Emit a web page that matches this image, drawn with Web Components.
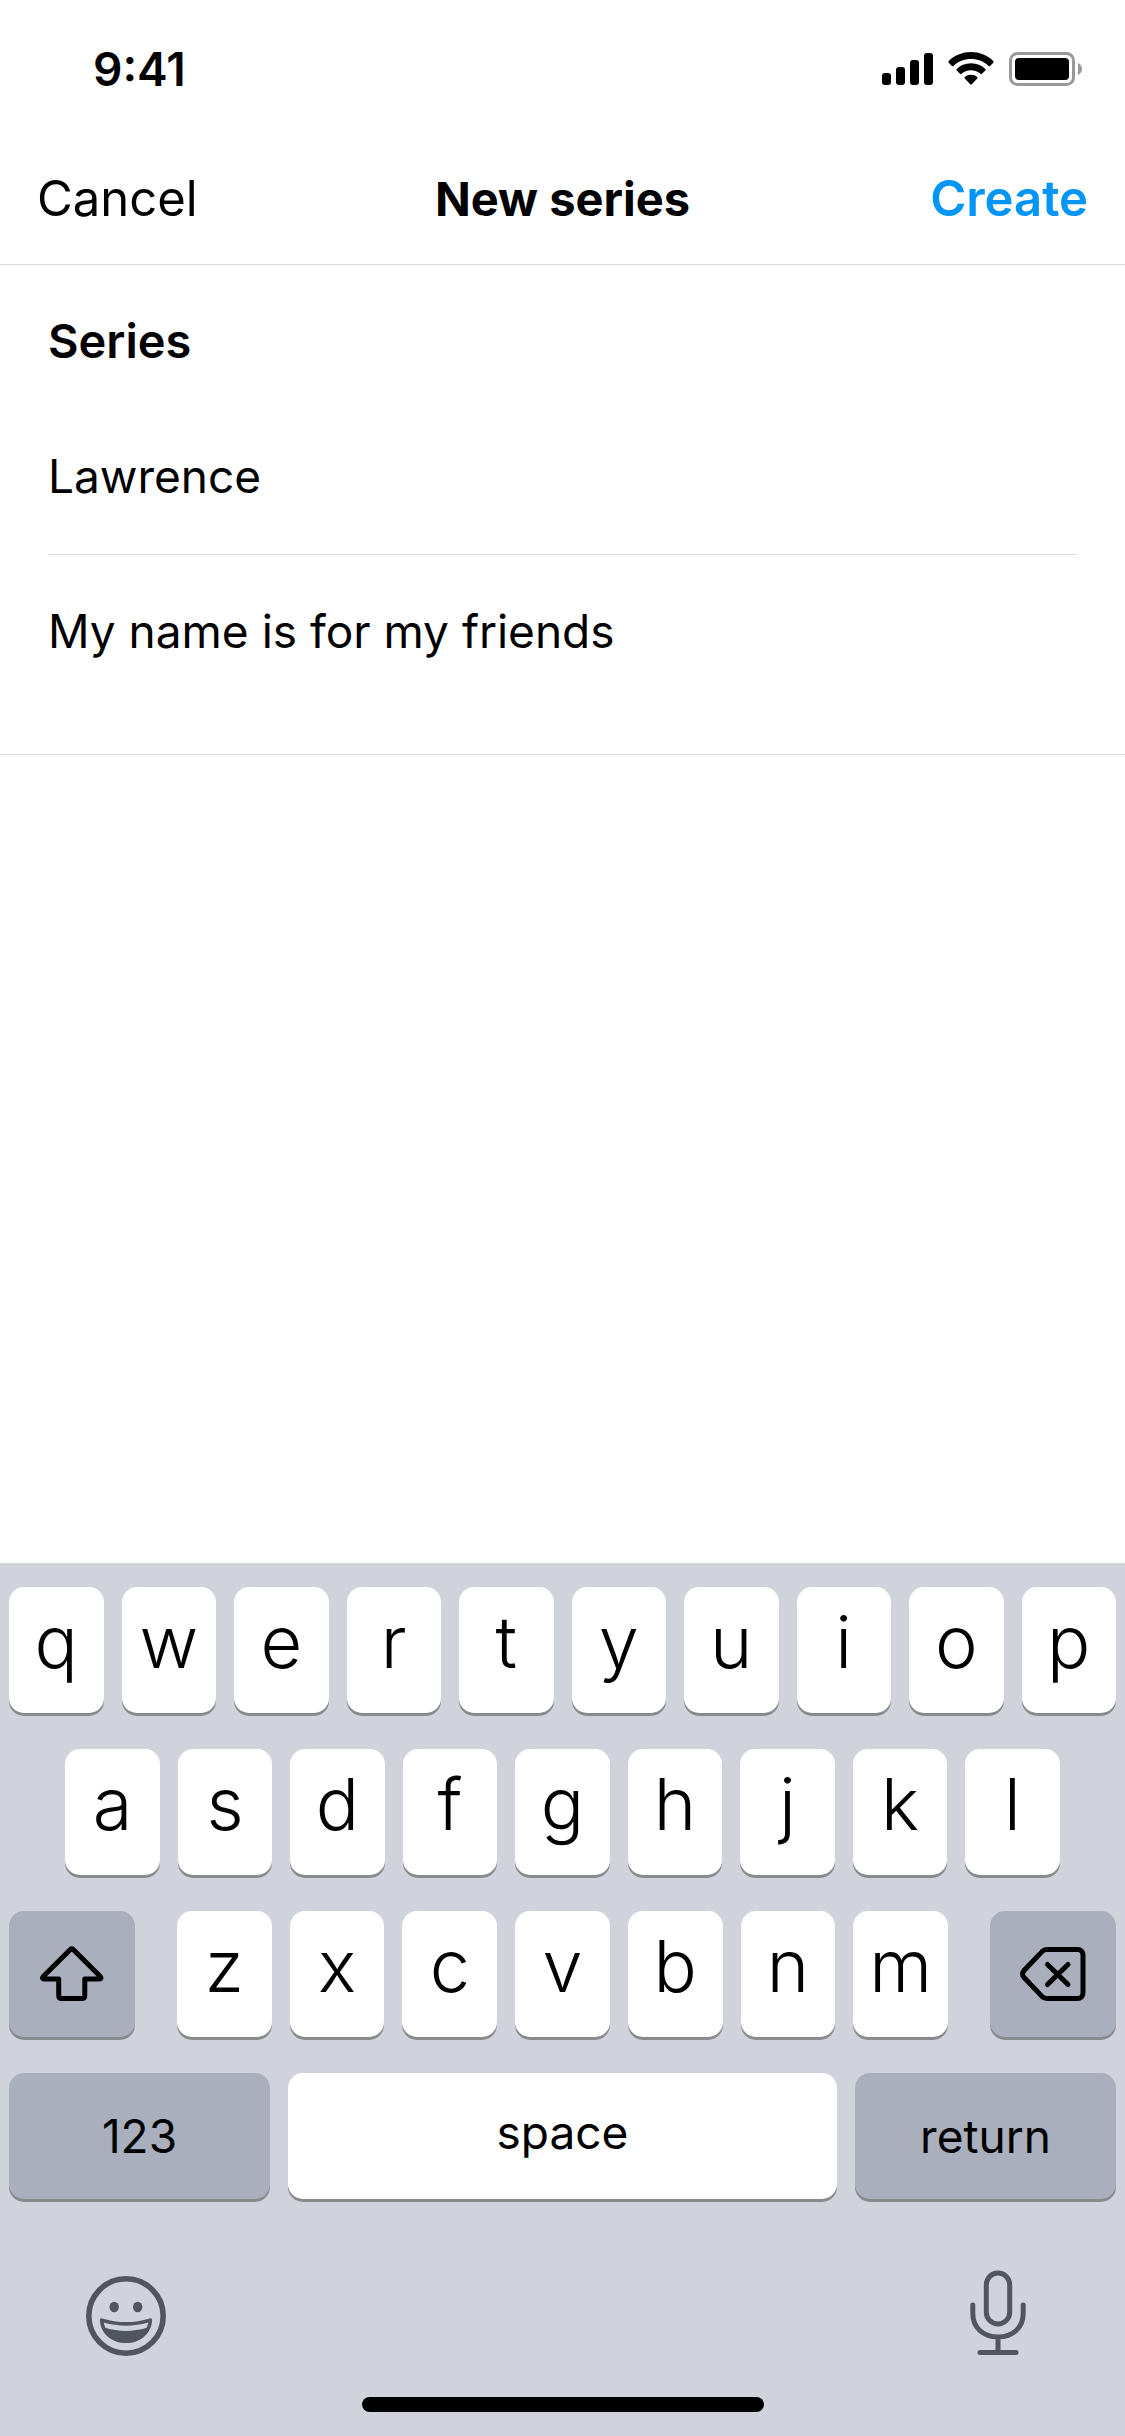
<!DOCTYPE html>
<html lang="en">
<head>
  <meta charset="UTF-8">
  <meta name="viewport" content="width=device-width, initial-scale=1">
  <title>New series</title>
  <style>
    body {
      margin: 0;
      background: #fff;
      color: #000;
      font-family: 'Inter', 'Liberation Sans', sans-serif;
    }
  </style>
</head>
<body>
  <series-screen></series-screen>

  <script>
    /* ── STATUS BAR ── */
    class StatusBar extends HTMLElement {
      constructor() {
        super();
        this.attachShadow({ mode: 'open' });
      }

      connectedCallback() {
        this.shadowRoot.innerHTML = /* html */`
          <style>
            :host {
              display: flex;
              justify-content: space-between;
              align-items: center;
              box-sizing: border-box;
              height: 132px;
              padding: 6px 43px 0 93px;
            }

            .time {
              font-size: 46px;
              font-weight: 600;
            }

            .icons {
              display: flex;
              align-items: center;
              gap: 15px;
            }

            svg { display: block; }
          </style>

          <span class="time"><slot></slot></span>
          <div class="icons">
            <svg width="51" height="34" viewBox="0 0 51 34" aria-hidden="true">
              <rect x="0" y="21" width="9" height="12" rx="3"/>
              <rect x="14" y="15" width="9" height="18" rx="3"/>
              <rect x="28" y="8" width="9" height="25" rx="3"/>
              <rect x="42" y="1" width="9" height="32" rx="3"/>
            </svg>
            <svg width="46" height="34" viewBox="0 0 46 34" aria-hidden="true">
              <path d="M23 0C31.800 0 39.800 3.400 45.300 9.100c.5.5.5 1.100 0 1.600l-3.300 3.200c-.5.5-1 .5-1.500 0C36 9.500 29.900 7 23 7S10 9.500 5.500 13.900c-.5.5-1 .5-1.500 0L.7 10.700c-.5-.5-.5-1.100 0-1.600C6.200 3.400 14.200 0 23 0z"/>
              <path d="M23 11.300c5.700 0 10.700 2.200 14.300 5.700.5.500.5 1.100 0 1.600l-3.300 3.200c-.5.500-1 .5-1.500 0-2.500-2.300-5.800-3.600-9.500-3.600s-7 1.300-9.500 3.600c-.5.500-1 .5-1.500 0l-3.300-3.200c-.5-.5-.5-1.100 0-1.600 3.600-3.500 8.600-5.700 14.300-5.700z"/>
              <path d="M23 22.700c2.400 0 4.600.8 6.200 2.200.5.5.5 1 0 1.500l-5.400 5.900c-.5.500-1.100.5-1.600 0l-5.400-5.900c-.5-.5-.5-1 0-1.500 1.600-1.400 3.800-2.200 6.200-2.200z"/>
            </svg>
            <svg width="73" height="34" viewBox="0 0 73 34" aria-hidden="true">
              <rect x="1.500" y="1.500" width="63" height="31" rx="7" fill="none" stroke="#999" stroke-width="3"/>
              <rect x="6" y="6" width="54" height="22" rx="4"/>
              <path d="M69 11c2.500 1.100 4 3.400 4 6s-1.500 4.900-4 6z" fill="#999"/>
            </svg>
          </div>
        `;
      }
    }
    customElements.define('status-bar', StatusBar);

    /* ── NAV BAR ── */
    class NavBar extends HTMLElement {
      constructor() {
        super();
        this.attachShadow({ mode: 'open' });
      }

      connectedCallback() {
        this.shadowRoot.innerHTML = /* html */`
          <style>
            :host {
              display: grid;
              grid-template-columns: 1fr auto 1fr;
              align-items: center;
              height: 132px;
              padding: 0 37px;
              border-bottom: 1px solid #dbdbdb;
            }

            h1 {
              margin: 0;
              font-size: 47px;
              font-weight: 700;
            }

            button {
              padding: 0;
              border: 0;
              background: none;
              color: #000;
              font: inherit;
              font-size: 49px;
            }

            .cancel { justify-self: start; }

            .create {
              justify-self: end;
              color: #0095f6;
              font-weight: 600;
            }
          </style>

          <button class="cancel" type="button">Cancel</button>
          <h1><slot></slot></h1>
          <button class="create" type="button">Create</button>
        `;
      }
    }
    customElements.define('nav-bar', NavBar);

    /* ── FORM ── */
    class SeriesForm extends HTMLElement {
      constructor() {
        super();
        this.attachShadow({ mode: 'open' });
      }

      get name() { return this.getAttribute('name') ?? ''; }
      get description() { return this.getAttribute('description') ?? ''; }

      connectedCallback() {
        this.shadowRoot.innerHTML = /* html */`
          <style>
            :host {
              display: block;
              padding: 48px 48px 0;
              border-bottom: 1px solid #dbdbdb;
            }

            h2 {
              margin: 0 0 28px;
              font-size: 47px;
              font-weight: 600;
              line-height: 56px;
            }

            input, textarea {
              display: block;
              box-sizing: border-box;
              width: 100%;
              margin: 0;
              border: 0;
              border-radius: 0;
              outline: 0;
              background: none;
              color: #000;
              font: inherit;
              font-size: 46px;
              line-height: 56px;
            }

            input {
              height: 158px;
              padding: 0;
              border-bottom: 1px solid #dbdbdb;
            }

            textarea {
              height: 199px;
              padding: 48px 0 0;
              resize: none;
              overflow: hidden;
            }
          </style>

          <h2><slot></slot></h2>
          <input type="text" aria-label="Series name" value="${this.name}">
          <textarea rows="1" aria-label="Series description">${this.description}</textarea>
        `;
      }
    }
    customElements.define('series-form', SeriesForm);

    /* ── KEY ── */
    class KeyCap extends HTMLElement {
      constructor() {
        super();
        this.attachShadow({ mode: 'open' });
      }

      get label() { return this.getAttribute('label') ?? ''; }

      connectedCallback() {
        this.shadowRoot.innerHTML = /* html */`
          <style>
            :host { display: block; }

            button {
              display: flex;
              align-items: center;
              justify-content: center;
              box-sizing: border-box;
              width: 100%;
              height: 126px;
              padding: 0 0 17px;
              border: 0;
              border-radius: 15px;
              background: #fff;
              box-shadow: 0 3px 0 #898a8d;
              color: #000;
              font: inherit;
              font-size: 72px;
              font-weight: 350;
            }

            :host([kind="space"]) button,
            :host([kind="action"]) button {
              font-size: 46px;
              font-weight: 400;
            }

            :host([kind="space"]) button { padding-bottom: 8px; }

            :host([kind="action"]) button {
              padding-bottom: 0;
              background: #a9afbc;
            }
          </style>

          <button type="button" ${this.label ? `aria-label="${this.label}"` : ''}><slot></slot></button>
        `;
      }
    }
    customElements.define('key-cap', KeyCap);

    /* ── KEYBOARD ── */
    class SoftKeyboard extends HTMLElement {
      constructor() {
        super();
        this.attachShadow({ mode: 'open' });
      }

      keys(letters) {
        return [...letters].map(l => `<key-cap>${l}</key-cap>`).join('');
      }

      connectedCallback() {
        this.shadowRoot.innerHTML = /* html */`
          <style>
            :host {
              display: block;
              padding: 24px 9px;
              background: #d0d3db;
            }

            /* twenty half-key columns, every letter spans two */
            .row {
              display: grid;
              grid-template-columns: repeat(20, 1fr);
              column-gap: 18px;
              margin-bottom: 36px;
            }

            .row key-cap { grid-column: span 2; }
            .middle key-cap:first-child { grid-column: 2 / span 2; }

            .lower, .bottom {
              display: flex;
              gap: 18px;
            }

            .lower { gap: 42px; }

            .lower > key-cap { flex: 0 0 126px; }

            .letters {
              flex: 1;
              display: grid;
              grid-template-columns: repeat(7, 1fr);
              gap: 18px;
            }

            .letters key-cap { grid-column: auto; }

            .bottom key-cap { flex: 0 1 261px; }
            .bottom key-cap[kind="space"] { flex: 1; }

            .tools {
              display: flex;
              justify-content: space-between;
              align-items: flex-end;
              height: 86px;
              margin-top: 71px;
              padding: 0 90px 0 77px;
            }

            .tools button {
              display: block;
              padding: 0;
              border: 0;
              background: none;
              color: #50555e;
            }

            svg { display: block; }

            .home {
              width: 402px;
              max-width: 60%;
              height: 15px;
              margin: 41px auto 0;
              border-radius: 8px;
              background: #000;
            }
          </style>

          <div class="row">${this.keys('qwertyuiop')}</div>
          <div class="row middle">${this.keys('asdfghjkl')}</div>
          <div class="row lower">
            <key-cap kind="action" label="Shift">
              <svg width="64" height="56" viewBox="0 0 64 56" fill="none" stroke="#000" stroke-width="5" stroke-linejoin="round">
                <path d="M30.300 3.400 3.200 30.600c-1.200 1.300-.6 2.500.8 2.500h14.700v16.400c0 2 1 3 3 3h20.100c2 0 3-1 3-3V33.100h14.700c1.400 0 2-1.200.8-2.500L33.200 3.400c-1-1-1.900-1-2.900 0z"/>
              </svg>
            </key-cap>
            <div class="letters">${this.keys('zxcvbnm')}</div>
            <key-cap kind="action" label="Delete">
              <svg width="66" height="54" viewBox="0 0 66 54" fill="none" stroke="#000" stroke-width="5" stroke-linecap="round" stroke-linejoin="round">
                <path d="M27 2.500h30.500c3.300 0 5.500 2.200 5.500 5.500v38c0 3.300-2.200 5.500-5.500 5.500H27c-2 0-3.500-.6-5-2.100L3.800 30.200c-1.700-1.900-1.700-4.500 0-6.400L22 4.600c1.500-1.500 3-2.100 5-2.100z"/>
                <path d="M27.500 17.500l20.500 20M48 17.500l-20.500 20"/>
              </svg>
            </key-cap>
          </div>
          <div class="row bottom">
            <key-cap kind="action">123</key-cap>
            <key-cap kind="space">space</key-cap>
            <key-cap kind="action">return</key-cap>
          </div>

          <div class="tools">
            <button type="button" aria-label="Emoji">
              <svg width="80" height="80" viewBox="0 0 80 80" fill="currentColor">
                <circle cx="40" cy="40" r="37.200" fill="none" stroke="currentColor" stroke-width="5.600"/>
                <ellipse cx="28.200" cy="31" rx="4.700" ry="5.300"/>
                <ellipse cx="51.700" cy="31" rx="4.700" ry="5.300"/>
                <path fill-rule="evenodd" d="M16.200 42.400C32 47.300 48 47.300 63.800 42.400c1.500-.4 2.500.4 2.300 2C65.200 58 54 67 40 67S14.800 58 13.900 44.400c-.2-1.600.8-2.400 2.300-2zM17.800 46.600c.3 2 .8 3.700 1.600 5.200 13.200 4.200 28 4.200 41.200 0 .8-1.500 1.300-3.200 1.600-5.200-14.500 4.200-29.900 4.200-44.400 0z"/>
              </svg>
            </button>
            <button type="button" aria-label="Dictate">
              <svg width="56" height="86" viewBox="0 0 56 86" fill="none" stroke="currentColor" stroke-width="5" stroke-linecap="round">
                <rect x="16.300" y="3" width="23.400" height="51" rx="11.700"/>
                <path d="M2.800 35v8.500C2.800 57.500 13 67 28 67s25.200-9.500 25.200-23.500V35M28 67v15M10 82.500h36"/>
              </svg>
            </button>
          </div>
          <div class="home"></div>
        `;
      }
    }
    customElements.define('soft-keyboard', SoftKeyboard);

    /* ── SCREEN ── */
    class SeriesScreen extends HTMLElement {
      constructor() {
        super();
        this.attachShadow({ mode: 'open' });
      }

      connectedCallback() {
        this.shadowRoot.innerHTML = /* html */`
          <style>
            :host {
              display: flex;
              flex-direction: column;
              min-height: 100vh;
            }

            main { flex: 1; }
          </style>

          <status-bar>9:41</status-bar>
          <nav-bar>New series</nav-bar>
          <main>
            <series-form name="Lawrence" description="My name is for my friends">Series</series-form>
          </main>
          <soft-keyboard></soft-keyboard>
        `;
      }
    }
    customElements.define('series-screen', SeriesScreen);
  </script>
</body>
</html>
